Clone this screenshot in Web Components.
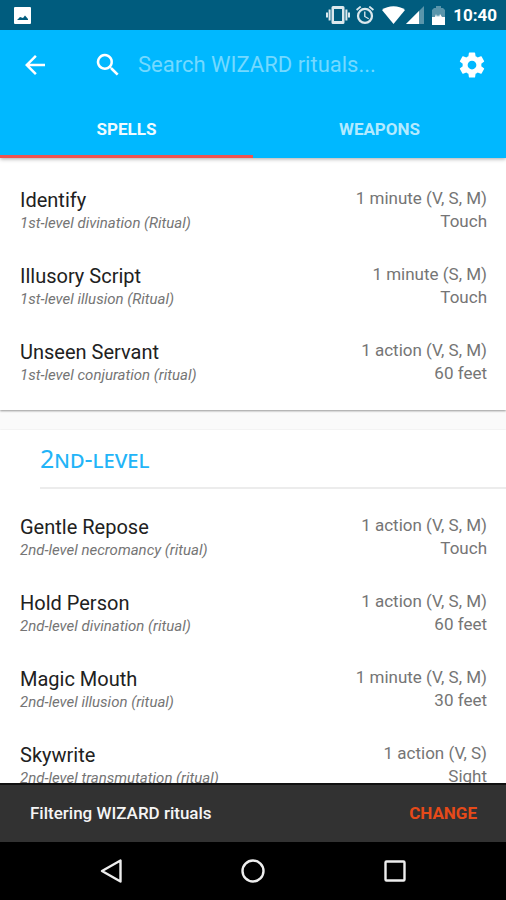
<!DOCTYPE html>
<html lang="en">
<head>
<meta charset="utf-8">
<meta name="viewport" content="width=device-width, initial-scale=1">
<title>Wizard rituals</title>
<style>
  html, body { height: 100%; margin: 0; }
  body { font-family: Roboto, "Liberation Sans", sans-serif; background: #fafafa; color: #212121; }
</style>
</head>
<body>
<ritual-app></ritual-app>

<script>
const define = (name, html, setup) => {
  const template = document.createElement('template');
  template.innerHTML = html;
  customElements.define(name, class extends HTMLElement {
    constructor() {
      super();
      this.attachShadow({ mode: 'open' }).append(template.content.cloneNode(true));
    }
    connectedCallback() { if (setup) setup(this, this.shadowRoot); }
  });
};

define('status-bar', `
<style>
  :host { display: flex; align-items: center; height: 30px; padding: 0 9px 0 14px; background: #005c7e; color: #fff; }
  svg { display: block; fill: currentColor; }
  .spacer { flex: 1; }
  .vibrate { margin-right: 6px; color: #dbe8ed; }
  .alarm { margin-right: 8px; color: #dbe8ed; }
  .signal { margin: 0 8px 0 1px; }
  .battery { margin-right: 8px; }
  time { font-size: 17px; line-height: 30px; font-weight: 700; }
</style>
<svg width="17" height="17" viewBox="0 0 17 17"><path fill-rule="evenodd" d="M1 0h15a1 1 0 0 1 1 1v15a1 1 0 0 1-1 1H1a1 1 0 0 1-1-1V1a1 1 0 0 1 1-1zM3 13h11v-1l-3-3.500-2 2.500-3-1z"/></svg>
<span class="spacer"></span>
<svg class="vibrate" width="24" height="18" viewBox="0 0 24 18"><path fill-rule="evenodd" d="M7 0h10a1.500 1.500 0 0 1 1.500 1.500v15A1.500 1.500 0 0 1 17 18H7a1.500 1.500 0 0 1-1.500-1.500v-15A1.500 1.500 0 0 1 7 0zm1 3v12h8V3zM2.600 3.500h2v11h-2zM0 6.500h2v5H0zM19.400 3.500h2v11h-2zM22 6.500h2v5h-2z"/></svg>
<svg class="alarm" width="18" height="18" viewBox="2 2 20 20"><path d="M22 5.720l-4.600-3.860-1.290 1.530 4.600 3.860L22 5.720zM7.880 3.390L6.600 1.860 2 5.710l1.290 1.530 4.590-3.850zM12.500 8H11v6l4.750 2.850.750-1.230-4-2.370V8zM12 4a9 9 0 1 0 0 18 9 9 0 0 0 0-18zm0 15.500a6.500 6.500 0 1 1 0-13 6.500 6.500 0 0 1 0 13z"/></svg>
<svg width="23" height="18" viewBox="0 0 23 18"><path d="M11.500 18L0 4C6-1 17-1 23 4z"/></svg>
<svg class="signal" width="18" height="18" viewBox="0 0 18 18"><path opacity=".35" d="M18 0v18H0z"/><path d="M13 5v13H0z"/></svg>
<svg class="battery" width="13" height="19" viewBox="0 0 13 19"><path opacity=".35" d="M4 0h5v2h2l2 2v8H0V4l2-2h2z"/><path d="M0 11h3l1-3 1 3 1-2 1 2 1-3 2 3h3v8H0z"/></svg>
<time>10:40</time>
`);

define('search-bar', `
<style>
  :host { display: flex; align-items: center; height: 70px; padding: 0 19px 0 20px; color: #fff; }
  button { display: block; padding: 0; border: 0; background: none; color: inherit; }
  svg { display: block; width: 30px; height: 30px; fill: currentColor; }
  label { margin-left: 43px; }
  input { flex: 1; min-width: 0; margin: 0 12px 0 15px; padding: 0; border: 0; outline: 0; background: none;
    font: 400 22px/30px Roboto, "Liberation Sans", sans-serif; color: #fff; }
  input::placeholder { color: #73d9ff; opacity: 1; }
</style>
<button aria-label="Back"><svg viewBox="0 0 24 24"><path d="M20 11H7.830l5.590-5.590L12 4l-8 8 8 8 1.410-1.410L7.830 13H20v-2z"/></svg></button>
<label for="q" aria-label="Search"><svg viewBox="0 0 24 24"><path d="M15.500 14h-.790l-.280-.270A6.500 6.500 0 1 0 13.730 14.430l.270.280v.790l5 4.990L20.490 19l-4.990-5zm-6 0a4.500 4.500 0 1 1 0-9 4.500 4.500 0 0 1 0 9z"/></svg></label>
<input id="q" type="text" placeholder="Search WIZARD rituals...">
<button aria-label="Settings"><svg viewBox="0 0 24 24"><path d="M19.430 12.980c.040-.320.070-.640.070-.980s-.030-.660-.070-.980l2.110-1.650c.190-.150.240-.420.120-.640l-2-3.460c-.120-.220-.390-.300-.610-.220l-2.490 1c-.520-.400-1.080-.730-1.690-.980l-.380-2.650A.490.490 0 0 0 14 2h-4c-.250 0-.460.180-.490.420l-.380 2.650c-.610.250-1.170.590-1.690.980l-2.490-1c-.230-.090-.490 0-.610.220l-2 3.460c-.130.220-.070.490.120.640l2.110 1.650c-.040.320-.070.650-.070.980s.030.660.070.980l-2.110 1.650c-.190.150-.240.420-.120.640l2 3.460c.120.220.390.300.610.220l2.490-1c.520.400 1.080.730 1.690.980l.380 2.650c.030.240.240.420.490.420h4c.250 0 .460-.180.490-.420l.380-2.650c.610-.250 1.170-.590 1.690-.980l2.490 1c.230.090.490 0 .610-.220l2-3.460c.120-.220.070-.490-.120-.640l-2.110-1.650zM12 15.500a3.500 3.500 0 1 1 0-7 3.500 3.500 0 0 1 0 7z"/></svg></button>
`);

define('tab-strip', `
<style>
  :host { display: grid; grid-template-columns: 1fr 1fr; height: 58px; }
  button { padding: 2px 0 0; border: 0; border-bottom: 3px solid transparent; background: none;
    font: 700 17px/24px Roboto, "Liberation Sans", sans-serif; color: #b3eaff; }
  button[aria-selected="true"] { color: #f0fbff; border-color: #ef5350; }
</style>
<button role="tab" aria-selected="true">SPELLS</button>
<button role="tab" aria-selected="false">WEAPONS</button>
`, host => host.setAttribute('role', 'tablist'));

define('spell-row', `
<style>
  :host { display: flex; justify-content: space-between; gap: 16px; }
  .name { font-size: 20px; line-height: 26px; color: #212121; }
  .school { font-size: 15px; line-height: 20px; font-style: italic; color: #757575; }
  .cast { font-size: 17px; line-height: 23px; text-align: right; color: #757575; }
</style>
<div><div class="name"><slot></slot></div><div class="school"></div></div>
<div class="cast"><div class="time"></div><div class="range"></div></div>
`, (host, root) => {
  for (const key of ['school', 'time', 'range']) root.querySelector('.' + key).textContent = host.getAttribute(key);
});

define('spell-card', `
<style>
  :host { display: block; background: #fff; box-shadow: 0 1px 2px rgba(0,0,0,.4); }
  .rows { display: flex; flex-direction: column; gap: 30px; padding: 25px 19px 25px 20px; }
  ::slotted(h2) { margin: 0 0 0 40px; padding-bottom: 1px; border-bottom: 2px solid #ececec;
    font: 400 25px/56px "Noto Sans", "Open Sans", sans-serif; font-variant-caps: small-caps; color: #22b4f8; }
</style>
<slot name="title"></slot>
<div class="rows"><slot></slot></div>
`);

define('snack-bar', `
<style>
  :host { display: flex; align-items: center; justify-content: space-between; height: 55px; padding: 0 29px 2px 30px;
    border-top: 2px solid #111; background: #323232; color: #f5f5f5; font-size: 17px; line-height: 24px; font-weight: 500; }
  button { padding: 0; border: 0; background: none; font: 700 17px/24px Roboto, "Liberation Sans", sans-serif; color: #e64a19; }
</style>
<span>Filtering WIZARD rituals</span><button>CHANGE</button>
`);

define('system-nav', `
<style>
  :host { display: flex; justify-content: center; gap: 118px; align-items: center; height: 58px; background: #000; }
  button { padding: 0; border: 0; background: none; }
  svg { display: block; fill: none; stroke: #eee; stroke-width: 2.400; stroke-linejoin: round; }
</style>
<button aria-label="Back"><svg width="24" height="24" viewBox="0 0 24 24"><path d="M21.500 1.500v21L3 12z"/></svg></button>
<button aria-label="Home"><svg width="24" height="24" viewBox="0 0 24 24"><circle cx="12" cy="12" r="10.500"/></svg></button>
<button aria-label="Recent apps"><svg width="24" height="24" viewBox="0 0 24 24"><rect x="2.500" y="2.500" width="19" height="19" rx="1"/></svg></button>
`);

define('ritual-app', `
<style>
  :host { display: flex; flex-direction: column; height: 100vh; overflow: hidden; }
  header { flex: none; position: relative; z-index: 1; background: #00b8ff; box-shadow: 0 1px 4px rgba(0,0,0,.35); }
  main { flex: 1; min-height: 0; overflow: hidden; display: flex; flex-direction: column; gap: 20px; }
  spell-card { flex: none; }
  spell-card:first-child { padding-top: 4px; }
  footer { flex: none; }
</style>
<header><status-bar></status-bar><search-bar></search-bar><tab-strip></tab-strip></header>
<main>
  <spell-card>
    <spell-row school="1st-level divination (Ritual)" time="1 minute (V, S, M)" range="Touch">Identify</spell-row>
    <spell-row school="1st-level illusion (Ritual)" time="1 minute (S, M)" range="Touch">Illusory Script</spell-row>
    <spell-row school="1st-level conjuration (ritual)" time="1 action (V, S, M)" range="60 feet">Unseen Servant</spell-row>
  </spell-card>
  <spell-card>
    <h2 slot="title">2nd-level</h2>
    <spell-row school="2nd-level necromancy (ritual)" time="1 action (V, S, M)" range="Touch">Gentle Repose</spell-row>
    <spell-row school="2nd-level divination (ritual)" time="1 action (V, S, M)" range="60 feet">Hold Person</spell-row>
    <spell-row school="2nd-level illusion (ritual)" time="1 minute (V, S, M)" range="30 feet">Magic Mouth</spell-row>
    <spell-row school="2nd-level transmutation (ritual)" time="1 action (V, S)" range="Sight">Skywrite</spell-row>
  </spell-card>
</main>
<footer><snack-bar></snack-bar><system-nav></system-nav></footer>
`);
</script>
</body>
</html>
